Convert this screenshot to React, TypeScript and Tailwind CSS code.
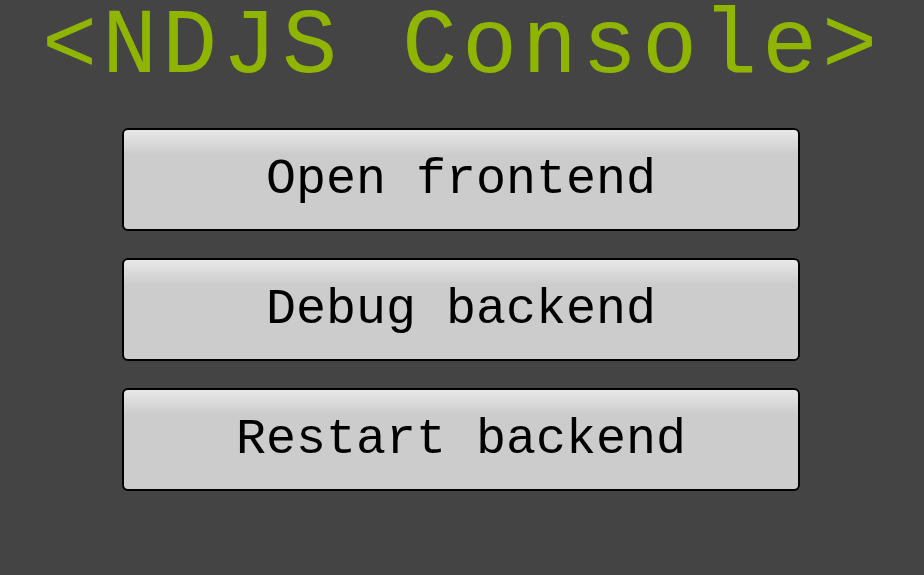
import React from 'react';

const actions = ['Open frontend', 'Debug backend', 'Restart backend'];

export default function App() {
  return (
    <div
      className="w-[924px] h-[575px] bg-[#444444] flex flex-col items-center"
      style={{ fontFamily: '"Liberation Mono", monospace' }}
    >
      <h1 className="text-[92px] leading-[96px] tracking-[4.8px] text-[#8fb500] whitespace-nowrap">
        &lt;NDJS Console&gt;
      </h1>

      <div className="mt-[32px] mr-[2px] flex flex-col gap-[27px]">
        {actions.map((label) => (
          <button
            key={label}
            className="w-[678px] h-[103px] rounded-[6px] border-2 border-black bg-gradient-to-b from-[#e8e8e8] via-[#cccccc] via-[25%] to-[#cccccc] text-black text-[50px] leading-none flex items-center justify-center"
          >
            {label}
          </button>
        ))}
      </div>
    </div>
  );
}
